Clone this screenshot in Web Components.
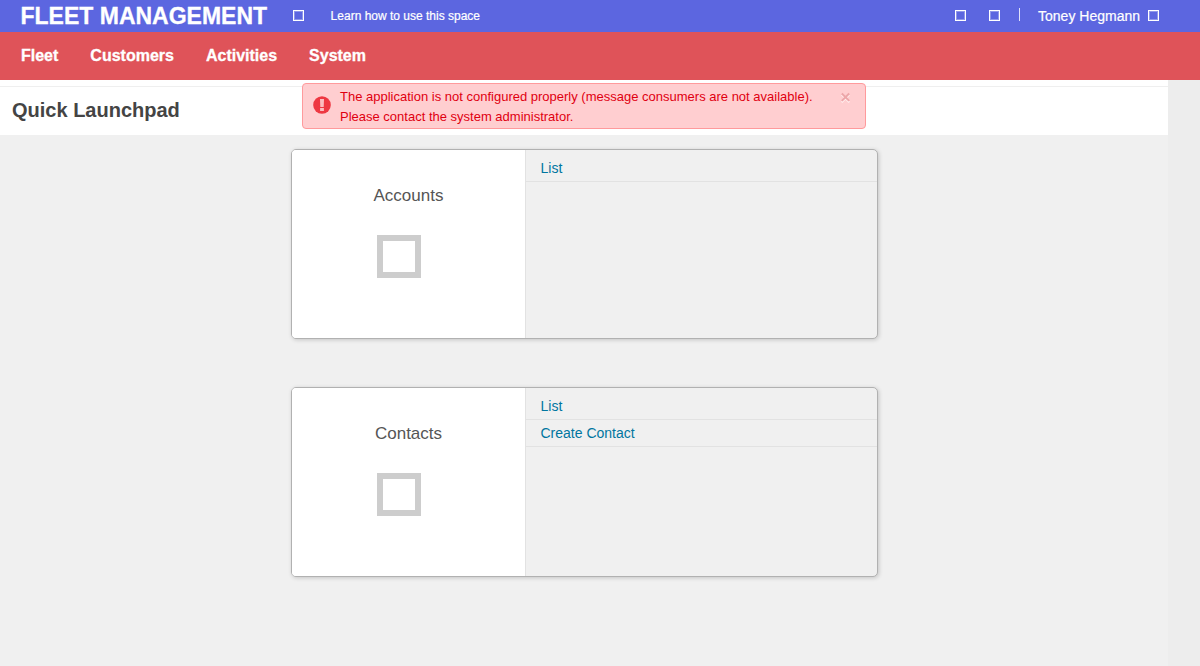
<!DOCTYPE html>
<html lang="en">
<head>
<meta charset="utf-8">
<title>Quick Launchpad</title>
<style>
html,body{height:100%}
body{margin:0;background:#ededed;font-family:"Liberation Sans",Arial,sans-serif;overflow:hidden}
</style>
</head>
<body>
<fleet-app></fleet-app>
<script>
const define = (name, html) => customElements.define(name, class extends HTMLElement {
  constructor() {
    super();
    this.attachShadow({ mode: 'open' }).innerHTML = html;
  }
});

define('glyph-box', `<style>
:host{display:block;flex:none;box-sizing:border-box;width:11px;height:11px;margin-bottom:1px;border:1px solid #fff;box-shadow:inset 0 0 0 1px #8f96ea}
</style>`);

define('top-bar', `<style>
:host{display:flex;height:32px;background:#5c66e0;color:#fff;align-items:center;box-sizing:border-box;padding:0 41px 0 20.5px}
b{font-size:23px;line-height:32px;-webkit-text-stroke:.3px #fff}
.help{margin-left:26px}
.learn{font-size:12px;margin-left:26.5px;-webkit-text-stroke:.2px #fff}
.tools{display:flex;align-items:center;margin-left:auto}
.tools glyph-box + glyph-box{margin-left:23px}
i{width:1px;height:13px;background:#dfe1fa;margin:0 18px 3px 19px}
.user{font-size:14px;margin-right:8px;-webkit-text-stroke:.2px #fff}
</style>
<b>FLEET MANAGEMENT</b><glyph-box class="help"></glyph-box><span class="learn">Learn how to use this space</span>
<div class="tools"><glyph-box></glyph-box><glyph-box></glyph-box><i></i><span class="user">Toney Hegmann</span><glyph-box></glyph-box></div>`);

define('main-nav', `<style>
:host{display:flex;gap:32px;height:48px;line-height:47px;background:#df5359;color:#fff;font-size:16px;font-weight:bold;padding-left:21px;-webkit-text-stroke:.3px #fff}
</style><slot></slot>`);

define('page-heading', `<style>
:host{display:block;height:55px;box-sizing:border-box;padding-top:6px;background:#fff}
h1{margin:0;border-top:1px solid #efefef;padding-left:12px;font-size:20px;line-height:46px;color:#444}
</style><h1><slot></slot></h1>`);

define('alert-message', `<style>
:host{position:absolute;left:302px;top:83px;width:564px;height:46px;box-sizing:border-box;border:1px solid #ff9a9c;border-radius:4px;background:#ffced0;color:#df0010;display:flex;font-size:13px;line-height:20px;padding:3px 14px 0 10px}
svg{display:block;flex:none}
.icon{margin:9px 9px 0 0}
.close{margin:5px 0 0 auto}
</style>
<svg class="icon" width="18" height="18" viewBox="0 0 18 18"><circle cx="9" cy="9" r="8.8" fill="#ee3842"/><path d="M7 3h4l-.3 8H7.3zM7.1 12h3.8v3H7.1z" fill="#fbbdc0"/></svg>
<div><slot></slot></div>
<svg class="close" width="11" height="11" viewBox="0 0 11 11"><path d="M1.7 2.7l7.6 7.6M9.3 2.7L1.7 10.3" stroke="#ffefef" stroke-width="1.8"/><path d="M1.8 1.5l7.4 7.4M9.2 1.5l-7.4 7.4" stroke="#eda6a9" stroke-width="2"/></svg>`);

define('launch-card', `<style>
:host{display:grid;grid-template-columns:233px 1fr;width:587px;height:190px;box-sizing:border-box;border:1px solid #b1b1b1;border-radius:5px;background:#f0f0f0;box-shadow:1px 1px 4px rgba(0,0,0,.18);overflow:hidden}
.intro{background:#fff;display:flex;flex-direction:column;align-items:center}
h2{margin:36px 0 0;font-size:17px;font-weight:normal;line-height:20px;color:#555}
.picture{box-sizing:border-box;width:44px;height:43px;margin:29px 19px 0 0;border:6px solid #cdcdcd}
.links{border-left:1px solid #e2e2e2;padding-top:5px}
</style>
<div class="intro"><h2><slot name="title"></slot></h2><div class="picture"></div></div>
<div class="links"><slot></slot></div>`);

define('launch-link', `<style>
:host{display:block;height:26px;line-height:26px;border-bottom:1px solid #e2e2e2;padding-left:14.5px;font-size:14px;color:#0076a0}
</style><slot></slot>`);

define('fleet-app', `<style>
:host{display:block;height:100%}
main{width:1168px;height:calc(100% - 80px);background:#f0f0f0}
.cards{display:flex;flex-direction:column;gap:48px;padding:14px 0 0 291px}
</style>
<top-bar></top-bar>
<main-nav><span>Fleet</span><span>Customers</span><span>Activities</span><span>System</span></main-nav>
<main>
<page-heading>Quick Launchpad</page-heading>
<div class="cards">
<launch-card><span slot="title">Accounts</span><launch-link>List</launch-link></launch-card>
<launch-card><span slot="title">Contacts</span><launch-link>List</launch-link><launch-link>Create Contact</launch-link></launch-card>
</div>
</main>
<alert-message>The application is not configured properly (message consumers are not available).<br>Please contact the system administrator.</alert-message>`);
</script>
</body>
</html>
